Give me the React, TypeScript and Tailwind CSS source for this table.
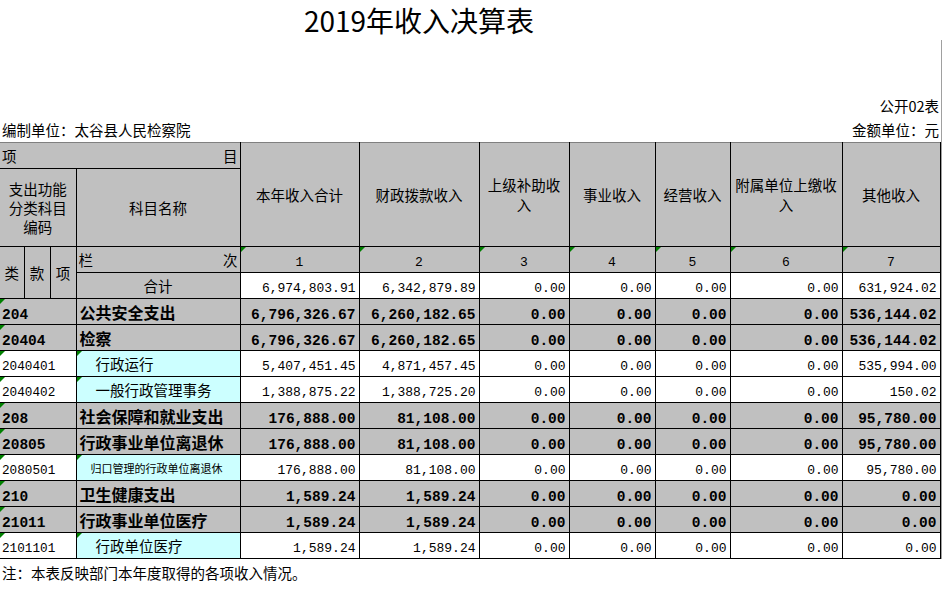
import React from 'react';

type Row = {
  code: string;
  name: string;
  kind: 'bold' | 'detail' | 'small';
  values: string[];
};

const zeros = ['0.00', '0.00', '0.00', '0.00'];

const rows: Row[] = [
  { code: '204', name: '公共安全支出', kind: 'bold', values: ['6,796,326.67', '6,260,182.65', ...zeros, '536,144.02'] },
  { code: '20404', name: '检察', kind: 'bold', values: ['6,796,326.67', '6,260,182.65', ...zeros, '536,144.02'] },
  { code: '2040401', name: '行政运行', kind: 'detail', values: ['5,407,451.45', '4,871,457.45', ...zeros, '535,994.00'] },
  { code: '2040402', name: '一般行政管理事务', kind: 'detail', values: ['1,388,875.22', '1,388,725.20', ...zeros, '150.02'] },
  { code: '208', name: '社会保障和就业支出', kind: 'bold', values: ['176,888.00', '81,108.00', ...zeros, '95,780.00'] },
  { code: '20805', name: '行政事业单位离退休', kind: 'bold', values: ['176,888.00', '81,108.00', ...zeros, '95,780.00'] },
  { code: '2080501', name: '归口管理的行政单位离退休', kind: 'small', values: ['176,888.00', '81,108.00', ...zeros, '95,780.00'] },
  { code: '210', name: '卫生健康支出', kind: 'bold', values: ['1,589.24', '1,589.24', ...zeros, '0.00'] },
  { code: '21011', name: '行政事业单位医疗', kind: 'bold', values: ['1,589.24', '1,589.24', ...zeros, '0.00'] },
  { code: '2101101', name: '行政单位医疗', kind: 'detail', values: ['1,589.24', '1,589.24', ...zeros, '0.00'] },
];

const total = ['6,974,803.91', '6,342,879.89', ...zeros, '631,924.02'];

const colWidths = [24, 26, 26, 164, 119, 120, 90, 86, 75, 112, 98];

const cjk = "font-['Noto_Sans_CJK_SC',sans-serif]";
const mono = "font-['Liberation_Mono','Noto_Sans_CJK_SC',monospace]";

// excel "number stored as text" marker
const Flag: React.FC = () => (
  <span className="absolute left-0 top-0 w-0 h-0 border-t-[5px] border-r-[5px] border-t-[#008000] border-r-transparent" />
);

// mono digits sit higher than the CJK glyphs, nudge them down to match
const Num: React.FC<{ children: React.ReactNode }> = ({ children }) => (
  <span className="relative top-[3px]">{children}</span>
);

const cell = 'border border-black p-0 relative align-middle';

const App: React.FC = () => {
  return (
    <div className={`w-[943px] h-[590px] bg-white text-black overflow-hidden ${cjk}`}>
      <div className="w-[838px] h-[40px] leading-[40px] text-center text-[28px]">2019年收入决算表</div>
      <div className="w-[942px] border-r border-[#a0a0a0] pt-[54px]">
        <div className="h-[24px] leading-[24px] text-right text-[14.5px] pr-[2px]">公开02表</div>
        <div className="h-[24px] leading-[24px] flex justify-between text-[14.5px] px-[2px]">
          <span>编制单位：太谷县人民检察院</span>
          <span>金额单位：元</span>
        </div>
        <table className="table-fixed border-collapse w-[940px] text-[14.5px]">
          <colgroup>
            {colWidths.map((w, i) => (
              <col key={i} style={{ width: w }} />
            ))}
          </colgroup>
          <tbody>
            <tr className="h-[26px] bg-[#c0c0c0]">
              <td colSpan={4} className={`${cell} border-l-0 border-t-[#808080] leading-[24px]`}>
                <div className="flex justify-between px-[2px]">
                  <span>项</span>
                  <span>目</span>
                </div>
              </td>
              {['本年收入合计', '财政拨款收入', '上级补助收<br>入', '事业收入', '经营收入', '附属单位上缴收<br>入', '其他收入'].map((t, i) => (
                <td key={i} rowSpan={2} className={`${cell} border-t-[#808080] text-center leading-[20px]`}>
                  {t.split('<br>').map((p, j) => (
                    <div key={j}>{p}</div>
                  ))}
                </td>
              ))}
            </tr>
            <tr className="h-[78px] bg-[#c0c0c0]">
              <td colSpan={3} className={`${cell} border-l-0 text-center leading-[19px]`}>
                <div>支出功能</div>
                <div>分类科目</div>
                <div>编码</div>
              </td>
              <td className={`${cell} text-center`}>科目名称</td>
            </tr>
            <tr className="h-[26px] bg-[#c0c0c0] leading-[24px]">
              <td rowSpan={2} className={`${cell} border-l-0 text-center`}>类</td>
              <td rowSpan={2} className={`${cell} text-center`}>款</td>
              <td rowSpan={2} className={`${cell} text-center`}>项</td>
              <td className={cell}>
                <div className="flex justify-between px-[2px]">
                  <span>栏</span>
                  <span>次</span>
                </div>
              </td>
              {[1, 2, 3, 4, 5, 6, 7].map((n) => (
                <td key={n} className={`${cell} text-center ${mono} text-[13px]`}>
                  <Flag />
                  <Num>{n}</Num>
                </td>
              ))}
            </tr>
            <tr className="h-[26px] leading-[24px]">
              <td className={`${cell} bg-[#c0c0c0] text-center`}>合计</td>
              {total.map((v, i) => (
                <td key={i} className={`${cell} bg-white text-right pr-[3px] ${mono} text-[13px]`}>
                  <Num>{v}</Num>
                </td>
              ))}
            </tr>
            {rows.map((r) => {
              const bold = r.kind === 'bold';
              return (
                <tr key={r.code} className={`h-[26px] leading-[24px] ${bold ? 'bg-[#c0c0c0] font-bold' : 'bg-white'}`}>
                  <td colSpan={3} className={`${cell} border-l-0 pl-[2px] ${mono} ${bold ? 'text-[14.5px]' : 'text-[12.7px]'}`}>
                    <Flag />
                    <Num>{r.code}</Num>
                  </td>
                  {bold ? (
                    <td className={`${cell} pl-[3px] text-[16px]`}>{r.name}</td>
                  ) : (
                    <td className={`${cell} bg-[#ccffff] ${r.kind === 'small' ? 'pl-[14px] text-[11px]' : 'pl-[19px]'}`}>
                      <Flag />
                      {r.name}
                    </td>
                  )}
                  {r.values.map((v, i) => (
                    <td key={i} className={`${cell} text-right pr-[3px] ${mono} ${bold ? 'text-[14.5px]' : 'text-[13px]'}`}>
                      <Num>{v}</Num>
                    </td>
                  ))}
                </tr>
              );
            })}
          </tbody>
        </table>
      </div>
      <div className="pl-[2px] pt-[3px] text-[14.5px] leading-[22px]">注：本表反映部门本年度取得的各项收入情况。</div>
    </div>
  );
};

export default App;
